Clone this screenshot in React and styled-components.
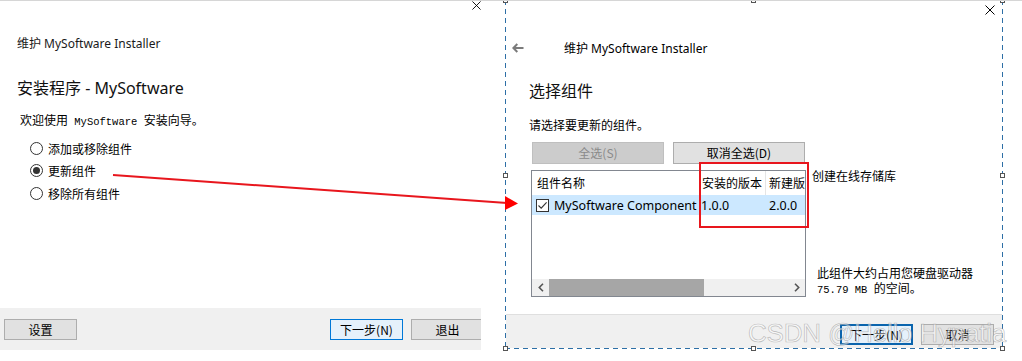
import React from 'react';
import styled, { createGlobalStyle } from 'styled-components';

const GlobalStyle = createGlobalStyle`
  html, body {
    margin: 0;
    padding: 0;
    background: #fff;
  }
  body {
    font-family: "Noto Sans", "Noto Sans CJK SC", sans-serif;
    font-size: 12px;
    color: #000;
  }
`;

const dash = '#2d6fa6';

const Page = styled.div`
  position: relative;
  display: flex;
  align-items: flex-start;
  width: 1022px;
  height: 361px;
  box-sizing: border-box;
  border-top: 1px solid #d6d6d6;
  overflow: hidden;
`;

const LeftWindow = styled.section`
  flex-shrink: 0;
  display: flex;
  flex-direction: column;
  width: 481px;
  height: 349px;
  background: #fff;
  overflow: hidden;
`;

const RightWindow = styled.section`
  position: relative;
  flex-shrink: 0;
  display: flex;
  flex-direction: column;
  box-sizing: border-box;
  width: 498px;
  height: 349px;
  margin: -1px 0 0 24px;
  padding: 1px;
  background:
    repeating-linear-gradient(90deg, ${dash} 0 5px, transparent 5px 9px) top left / 100% 1px no-repeat,
    repeating-linear-gradient(90deg, ${dash} 0 5px, transparent 5px 9px) bottom left / 100% 1px no-repeat,
    repeating-linear-gradient(180deg, ${dash} 0 5px, transparent 5px 9px) top left / 1px 100% no-repeat,
    repeating-linear-gradient(180deg, ${dash} 0 5px, transparent 5px 9px) top right / 1px 100% no-repeat,
    #fff;
`;

const CloseRow = styled.div`
  display: flex;
  justify-content: flex-end;
  box-sizing: border-box;
  height: ${p => p.$height}px;
  padding: ${p => p.$pad};
`;

const WindowTitle = styled.div`
  margin-top: ${p => p.$top}px;
  padding-left: ${p => p.$left}px;
  line-height: 16px;
  font-size: 12px;
  color: #1a1a1a;
`;

const NavRow = styled.div`
  display: flex;
  align-items: center;
  height: 16px;
  margin-top: 25px;
  padding-left: 6px;
  gap: 40px;
`;

const Heading = styled.h1`
  margin: ${p => p.$top}px 0 0;
  padding-left: ${p => p.$left}px;
  font-size: 16px;
  font-weight: 400;
  line-height: 22px;
  color: #111;
`;

const Text = styled.div`
  margin-top: ${p => p.$top}px;
  padding-left: ${p => p.$left}px;
  height: 16px;
  line-height: 16px;
  font-size: 12px;
  font-family: "Noto Sans CJK SC", sans-serif;
`;

const Mono = styled.span`
  font-family: "Liberation Mono", monospace;
  font-size: 10.5px;
  line-height: 0;
`;

const RadioGroup = styled.div`
  display: flex;
  flex-direction: column;
  margin-top: 9px;
  padding-left: 30px;
`;

const RadioRow = styled.label`
  display: flex;
  align-items: center;
  gap: 5px;
  height: 22.5px;
  font-family: "Noto Sans CJK SC", sans-serif;
  font-size: 12px;
`;

const RadioCircle = styled.span`
  display: inline-flex;
  align-items: center;
  justify-content: center;
  box-sizing: border-box;
  width: 13px;
  height: 13px;
  border: 1px solid #333;
  border-radius: 50%;
  background: #fff;
  &::after {
    content: '';
    width: 7px;
    height: 7px;
    border-radius: 50%;
    background: ${p => (p.$checked ? '#333' : 'transparent')};
  }
`;

const Spacer = styled.div`
  flex: 1;
`;

const BottomBar = styled.footer`
  display: flex;
  align-items: flex-start;
  box-sizing: border-box;
  height: ${p => p.$height}px;
  padding: ${p => p.$pad};
  gap: 8px;
  justify-content: ${p => p.$justify || 'flex-start'};
  background: #f0f0f0;
  border-top: ${p => (p.$line ? '1px solid #dfdfdf' : 'none')};
`;

const buttonLook = {
  normal: { bg: '#e1e1e1', border: '1px solid #adadad', color: '#000' },
  primary: { bg: '#e5f1fb', border: '1px solid #0078d7', color: '#000' },
  focused: { bg: '#e5f1fb', border: '2px solid #0a64ad', color: '#000' },
  disabled: { bg: '#cccccc', border: '1px solid #bfbfbf', color: '#8a8a8a' },
};

const Button = styled.button`
  flex-shrink: 0;
  box-sizing: border-box;
  width: ${p => p.$width || 73}px;
  height: ${p => p.$height || 21}px;
  margin-left: ${p => p.$offset || 0}px;
  padding: 0;
  background: ${p => buttonLook[p.$variant || 'normal'].bg};
  border: ${p => buttonLook[p.$variant || 'normal'].border};
  color: ${p => buttonLook[p.$variant || 'normal'].color};
  font-family: "Noto Sans CJK SC", sans-serif;
  font-size: 12px;
  line-height: 1;
`;

const ButtonRow = styled.div`
  display: flex;
  gap: 9px;
  margin-top: 9px;
  padding-left: 26px;
`;

const MainRow = styled.div`
  display: flex;
  gap: 6px;
  margin-top: 6px;
  padding-left: 25px;
  height: 127px;
`;

const ListView = styled.div`
  display: flex;
  flex-direction: column;
  box-sizing: border-box;
  width: 275px;
  height: 127px;
  border: 1px solid #828790;
  background: #fff;
  overflow: hidden;
`;

const Columns = styled.div`
  display: grid;
  grid-template-columns: 169px 65px 1fr;
  height: ${p => p.$height}px;
  align-items: center;
  background: ${p => (p.$selected ? '#cce8ff' : 'transparent')};
  font-size: 12px;
  white-space: nowrap;
`;

const HeaderCell = styled.div`
  box-sizing: border-box;
  height: 100%;
  line-height: 24px;
  padding-left: ${p => p.$pad}px;
  border-right: ${p => (p.$sep ? '1px solid #e5e5e5' : 'none')};
  overflow: hidden;
  font-family: "Noto Sans CJK SC", sans-serif;
`;

const Cell = styled.div`
  display: flex;
  align-items: center;
  gap: 5px;
  padding-left: ${p => p.$pad}px;
  overflow: hidden;
  font-size: 12.5px;
`;

const CheckBox = styled.span`
  display: inline-flex;
  align-items: center;
  justify-content: center;
  box-sizing: border-box;
  width: 13px;
  height: 13px;
  border: 1px solid #333;
  background: #fff;
`;

const ScrollBar = styled.div`
  display: flex;
  align-items: stretch;
  margin-top: auto;
  height: 17px;
  background: #f0f0f0;
`;

const ScrollArrow = styled.div`
  display: flex;
  align-items: center;
  justify-content: center;
  width: 17px;
`;

const ScrollThumb = styled.div`
  width: 155px;
  background: #a6a6a6;
`;

const SideColumn = styled.div`
  display: flex;
  flex-direction: column;
  height: 127px;
  font-family: "Noto Sans CJK SC", sans-serif;
  font-size: 12px;
  white-space: nowrap;
`;

const SideNote = styled.div`
  margin-top: -1px;
  line-height: 14px;
`;

const SizeNote = styled.div`
  margin: auto 0 0 5px;
  padding-bottom: 2px;
  line-height: 15px;
`;

const Handle = styled.span`
  position: absolute;
  left: ${p => p.$x - 2}px;
  top: ${p => p.$y - 2}px;
  box-sizing: border-box;
  width: 5px;
  height: 5px;
  background: #fff;
  border: 1px solid #555;
`;

const Overlay = styled.div`
  position: absolute;
  left: 0;
  top: -1px;
  width: 1022px;
  height: 361px;
  pointer-events: none;
`;

const Highlight = styled.div`
  position: absolute;
  left: 699px;
  top: 162px;
  width: 110px;
  height: 66px;
  box-sizing: border-box;
  border: 2px solid #e8161d;
`;

const Watermark = styled.div`
  position: absolute;
  left: 748px;
  top: 320px;
  font-family: "Liberation Sans", Arial, sans-serif;
  font-size: 26px;
  line-height: 26px;
  letter-spacing: -0.2px;
  white-space: nowrap;
  color: rgba(255, 255, 255, 0.5);
  -webkit-text-stroke: 0.7px rgba(140, 140, 140, 0.55);
`;

const CloseIcon = ({ size }) => (
  <svg width={size} height={size} viewBox="0 0 10 10">
    <path d="M0.5 0.5 L9.5 9.5 M9.5 0.5 L0.5 9.5" stroke="#000" strokeWidth="1" fill="none" />
  </svg>
);

const BackIcon = () => (
  <svg width="12" height="10" viewBox="0 0 12 10">
    <path d="M11.5 5 H1.5 M5.3 1 L1.4 5 L5.3 9" stroke="#7b7b7b" strokeWidth="2" fill="none" />
  </svg>
);

const CheckIcon = () => (
  <svg width="11" height="11" viewBox="0 0 11 11">
    <path d="M1.5 5.5 L4.2 8.2 L9.6 2.3" stroke="#333" strokeWidth="1.1" fill="none" />
  </svg>
);

const Chevron = ({ dir }) => (
  <svg width="6" height="9" viewBox="0 0 6 9">
    <path
      d={dir === 'left' ? 'M5 0.8 L1.3 4.5 L5 8.2' : 'M1 0.8 L4.7 4.5 L1 8.2'}
      stroke="#555"
      strokeWidth="1.6"
      fill="none"
    />
  </svg>
);

const options = [
  { label: '添加或移除组件', checked: false },
  { label: '更新组件', checked: true },
  { label: '移除所有组件', checked: false },
];

const handles = [
  [0, 0], [248, 0], [497, 0],
  [0, 175], [497, 175],
  [0, 348], [248, 348], [497, 348],
];

export default function App() {
  return (
    <>
      <GlobalStyle />
      <Page>
        <LeftWindow>
          <CloseRow $height={9} $pad="0">
            <CloseIcon size={9} />
          </CloseRow>
          <WindowTitle $top={26} $left={17}>维护 MySoftware Installer</WindowTitle>
          <Heading $top={25} $left={17}>安装程序 - MySoftware</Heading>
          <Text $top={13} $left={20}>
            欢迎使用<Mono> MySoftware </Mono>安装向导。
          </Text>
          <RadioGroup>
            {options.map(opt => (
              <RadioRow key={opt.label}>
                <RadioCircle $checked={opt.checked} />
                {opt.label}
              </RadioRow>
            ))}
          </RadioGroup>
          <Spacer />
          <BottomBar $height={42} $pad="11px 0 0 4px">
            <Button>设置</Button>
            <Button $variant="primary" $offset={245}>下一步(N)</Button>
            <Button>退出</Button>
          </BottomBar>
        </LeftWindow>

        <RightWindow>
          {handles.map(([x, y]) => (
            <Handle key={`${x}-${y}`} $x={x} $y={y} />
          ))}
          <CloseRow $height={14} $pad="4px 7px 0 0">
            <CloseIcon size={10} />
          </CloseRow>
          <NavRow>
            <BackIcon />
            <span>维护 MySoftware Installer</span>
          </NavRow>
          <Heading $top={24} $left={23}>选择组件</Heading>
          <Text $top={15} $left={23}>请选择要更新的组件。</Text>
          <ButtonRow>
            <Button $variant="disabled" $width={132} $height={22}>全选(S)</Button>
            <Button $width={132} $height={22}>取消全选(D)</Button>
          </ButtonRow>
          <MainRow>
            <ListView>
              <Columns $height={24}>
                <HeaderCell $pad={5} $sep>组件名称</HeaderCell>
                <HeaderCell $pad={1} $sep>安装的版本</HeaderCell>
                <HeaderCell $pad={3}>新建版本</HeaderCell>
              </Columns>
              <Columns $height={20} $selected>
                <Cell $pad={4}>
                  <CheckBox><CheckIcon /></CheckBox>
                  MySoftware Component
                </Cell>
                <Cell $pad={0}>1.0.0</Cell>
                <Cell $pad={3}>2.0.0</Cell>
              </Columns>
              <ScrollBar>
                <ScrollArrow><Chevron dir="left" /></ScrollArrow>
                <ScrollThumb />
                <Spacer />
                <ScrollArrow><Chevron dir="right" /></ScrollArrow>
              </ScrollBar>
            </ListView>
            <SideColumn>
              <SideNote>创建在线存储库</SideNote>
              <SizeNote>
                此组件大约占用您硬盘驱动器
                <br />
                <Mono>75.79 MB </Mono>的空间。
              </SizeNote>
            </SideColumn>
          </MainRow>
          <Spacer />
          <BottomBar $height={34} $pad="9px 8px 0 0" $justify="flex-end" $line>
            <Button $variant="focused">下一步(N)</Button>
            <Button>取消</Button>
          </BottomBar>
        </RightWindow>

        <Overlay>
          <svg width="1022" height="361" viewBox="0 0 1022 361">
            <line x1="113" y1="175" x2="507" y2="203" stroke="#e8161d" strokeWidth="2" />
            <polygon points="505,196 518,203.5 505,210" fill="#ff0000" />
          </svg>
          <Highlight />
          <Watermark>CSDN @Hello Hypatia</Watermark>
        </Overlay>
      </Page>
    </>
  );
}
